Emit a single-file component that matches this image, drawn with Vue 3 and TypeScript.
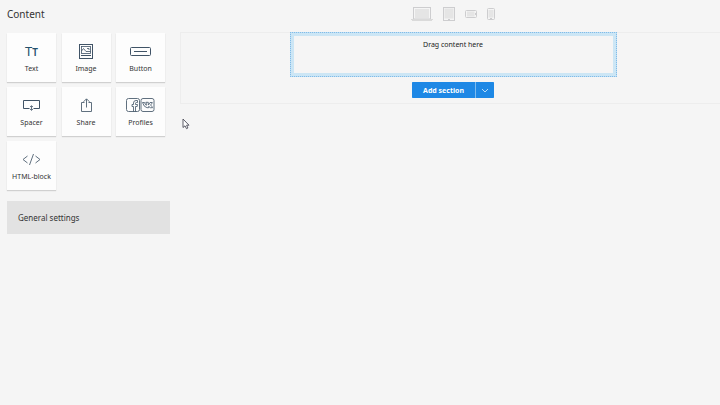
<script setup lang="ts">
type BlockId = 'text' | 'image' | 'button' | 'spacer' | 'share' | 'profiles' | 'html'

interface Block {
  id: BlockId
  label: string
}

const blocks: Block[] = [
  { id: 'text', label: 'Text' },
  { id: 'image', label: 'Image' },
  { id: 'button', label: 'Button' },
  { id: 'spacer', label: 'Spacer' },
  { id: 'share', label: 'Share' },
  { id: 'profiles', label: 'Profiles' },
  { id: 'html', label: 'HTML-block' },
]
</script>

<template>
  <div class="editor">
    <aside class="sidebar">
      <h1 class="title">Content</h1>
      <div class="blocks">
        <button v-for="block in blocks" :key="block.id" type="button" class="block">
          <span class="icon">
            <span v-if="block.id === 'text'" class="type-icon"><span>T</span><span class="small-t">T</span></span>
            <svg v-else-if="block.id === 'image'" width="14" height="15" viewBox="0 0 14 15">
              <rect x=".5" y=".5" width="13" height="14" />
              <rect class="thin" x="2.500" y="2.500" width="9" height="7" />
              <path class="thin" d="M2.500 7 L4.500 4.500 L7 7.500 H11.500" />
              <path d="M2 11.500 H12" />
              <path class="thin" d="M8 4.500 H10 V6" />
            </svg>
            <svg v-else-if="block.id === 'button'" width="21" height="9" viewBox="0 0 21 9">
              <rect x=".5" y=".5" width="20" height="8" rx="1" />
              <path d="M4 4.500 H17" />
            </svg>
            <svg v-else-if="block.id === 'spacer'" width="17" height="12" viewBox="0 0 17 12">
              <path d="M6.500 9.500 H.5 V1.500 H16.500 V9.500 H10.500" />
              <path class="thin" d="M8.500 7 V11 M7 8 L8.500 6.700 L10 8 M7 10 L8.500 11.400 L10 10" />
            </svg>
            <svg v-else-if="block.id === 'share'" width="11" height="15" viewBox="0 0 11 15">
              <path class="soft" d="M3.500 4.500 H.5 V13.500 H10.500 V4.500 H7.500 M5.500 9.500 V1 M2.500 3.800 L5.500 .8 L8.500 3.800" />
            </svg>
            <svg v-else-if="block.id === 'profiles'" width="29" height="15" viewBox="0 0 29 15">
              <rect class="soft" x=".5" y=".5" width="13" height="13" rx="2" />
              <rect class="soft" x="15" y=".5" width="13" height="13" rx="2" />
              <path class="thin" d="M7.500 13.500 V8.500 H6 V6.500 H7.500 V5 Q7.500 2.500 10 2.500 H11.500 V4.500 H10.500 Q9.500 4.500 9.500 5.500 V6.500 H11.500 L11.200 8.500 H9.500 V13.500" />
              <path class="thin" d="M16.500 4.500 H18.500 Q19.200 6.500 20.300 7.300 V5.300 L19.800 4.300 H22.300 V7 Q23.500 6 24 4.500 H26.300 Q25.800 6 24.500 7 Q26 8.200 26.500 9.700 H24.300 L22.700 8.300 V9.700 H21 Q18 9.300 16.500 4.500 Z" />
            </svg>
            <svg v-else width="19" height="13" viewBox="0 0 19 13">
              <path class="soft" d="M5.500 3 L1 6.500 L5.500 10 M13.500 3 L18 6.500 L13.500 10 M11.500 1 L7.500 12" />
            </svg>
          </span>
          <span class="label">{{ block.label }}</span>
        </button>
      </div>
      <button type="button" class="settings">General settings</button>
    </aside>

    <main class="workspace">
      <nav class="devices" aria-label="Preview device">
        <button type="button" aria-label="Laptop">
          <svg width="22" height="14" viewBox="0 0 22 14">
            <rect x="2.500" y=".5" width="17" height="11.500" />
            <rect class="screen" x="4" y="2" width="14" height="9" />
            <path class="base" d="M0 12.500 H22 M1 13.500 H21" />
          </svg>
        </button>
        <button type="button" aria-label="Tablet">
          <svg width="12" height="14" viewBox="0 0 12 14">
            <rect x=".5" y=".5" width="11" height="13" />
            <rect class="screen" x="1.500" y="1.500" width="9" height="10" />
            <path d="M5 12.500 H7" />
          </svg>
        </button>
        <button type="button" aria-label="Phone, landscape">
          <svg width="12" height="8" viewBox="0 0 12 8">
            <rect x=".5" y=".5" width="11" height="7" rx="1" />
            <rect class="screen" x="2" y="1.500" width="7.500" height="5" />
            <path d="M10.500 3 V5" />
          </svg>
        </button>
        <button type="button" aria-label="Phone, portrait">
          <svg width="8" height="12" viewBox="0 0 8 12">
            <rect x=".5" y=".5" width="7" height="11" rx="1" />
            <rect class="screen" x="1.500" y="2" width="5" height="7.500" />
            <path d="M3 10.500 H5" />
          </svg>
        </button>
      </nav>
      <section class="canvas">
        <div class="dropzone">Drag content here</div>
        <div class="split">
          <button type="button" class="add">Add section</button>
          <button type="button" class="more" aria-label="More section options">
            <svg width="8" height="5" viewBox="0 0 8 5"><path d="M1 1 L4 4 L7 1" /></svg>
          </button>
        </div>
      </section>
    </main>

    <svg class="pointer" width="8" height="12" viewBox="0 0 8 12" aria-hidden="true">
      <path d="M1 1 V9.500 L3 7.800 L4.500 10.700 L5.900 10 L4.600 7.200 H7 Z" />
    </svg>
  </div>
</template>

<style>
body {
  background: #f5f5f5;
}
</style>

<style scoped>
.editor {
  display: flex;
  position: relative;
  min-height: 100vh;
  background: #f5f5f5;
  color: #333;
  font-family: "Noto Sans", "Open Sans", sans-serif;
  overflow: hidden;
}

button {
  margin: 0;
  padding: 0;
  border: 0;
  background: none;
  color: inherit;
  font: inherit;
  cursor: pointer;
}

svg {
  display: block;
  fill: none;
}

.sidebar {
  flex: none;
  width: 163px;
  padding: 6px 10px 0 7px;
}

.title {
  margin: 0 0 11px;
  font-size: 10px;
  font-weight: 400;
  line-height: 16px;
}

.blocks {
  display: grid;
  grid-template-columns: repeat(3, 49px);
  justify-content: space-between;
  row-gap: 5px;
  padding-right: 5px;
}

.block {
  display: flex;
  flex-direction: column;
  align-items: center;
  height: 49px;
  padding-top: 9px;
  background: #fdfdfd;
  box-shadow: 0 1px 1px #d0d0d0;
}

.icon {
  display: flex;
  align-items: center;
  justify-content: center;
  height: 18px;
}

.icon svg {
  stroke: #405366;
}

.icon .thin {
  stroke-width: .8;
}

.icon .soft {
  stroke: #60707f;
}

.type-icon {
  display: flex;
  align-items: baseline;
  color: #25506b;
  font-size: 13px;
  line-height: 18px;
}

.small-t {
  font-size: 10px;
  font-weight: 600;
}

.label {
  margin-top: 4px;
  font-size: 7px;
  line-height: 10px;
  white-space: nowrap;
}

.settings {
  display: block;
  width: 100%;
  margin-top: 11px;
  padding: 0 11px;
  background: #e2e2e2;
  font-size: 8px;
  line-height: 33px;
  text-align: left;
}

.workspace {
  flex: 1;
  min-width: 0;
}

.devices {
  display: flex;
  align-items: center;
  justify-content: center;
  gap: 10px;
  height: 28px;
  margin-bottom: 4px;
  padding-left: 6px;
}

.devices svg {
  stroke: #cdcdcf;
}

.devices .screen {
  fill: #e5e5e5;
  stroke: none;
}

.devices .base {
  stroke: #dadada;
}

.canvas {
  display: flex;
  flex-direction: column;
  align-items: center;
  gap: 5px;
  padding: 0 0 5px 5px;
  border: 1px solid #ededed;
  border-right: 0;
}

.dropzone {
  box-sizing: border-box;
  width: 327px;
  max-width: 100%;
  height: 45px;
  margin-top: -1px;
  padding-top: 7px;
  border: 1px dotted #82bce8;
  background: linear-gradient(#f5f5f5, #f5f5f5) padding-box, #c0dff3 border-box;
  box-shadow: inset 0 0 0 3px #cce6f5;
  color: #222;
  font-size: 7px;
  line-height: 10px;
  text-align: center;
}

.split {
  display: flex;
  gap: 1px;
  height: 16px;
  border-radius: 1px;
  overflow: hidden;
  background: #7dbbef;
}

.add,
.more {
  background: #1e88e5;
  color: #fff;
}

.add {
  width: 63px;
  font-size: 7px;
  font-weight: 700;
}

.more {
  display: flex;
  align-items: center;
  justify-content: center;
  width: 18px;
}

.more svg {
  stroke: #b9dcf8;
}

.pointer {
  position: absolute;
  top: 118px;
  left: 182px;
  fill: #fff;
  stroke: #4c4c58;
  stroke-width: .9;
}
</style>
